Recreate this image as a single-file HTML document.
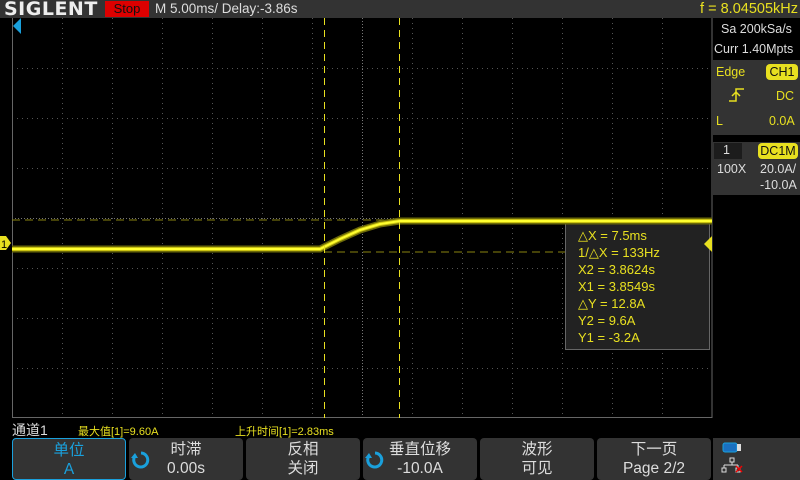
<!DOCTYPE html>
<html><head><meta charset="utf-8"><style>
*{margin:0;padding:0;box-sizing:border-box}
body{width:800px;height:480px;background:#000;overflow:hidden;position:relative;font-family:"Liberation Sans","Noto Sans CJK SC",sans-serif}
.abs{position:absolute}
.top{left:0;top:0;width:800px;height:18px;background:#333}
.logo{left:4px;top:-2px;color:#eee;font-weight:bold;font-size:19px;letter-spacing:0.5px;font-family:"DejaVu Sans",sans-serif}
.stop{left:105px;top:1px;width:44px;height:16px;background:#d00;color:#111;font-size:13px;text-align:center;line-height:16px}
.tb{left:155px;top:0;color:#ddd;font-size:13.5px;line-height:18px}
.freq{right:2px;top:0;color:#e8e020;font-size:14.5px;line-height:18px}
.rp{left:713px;width:87px;color:#ddd;font-size:12.5px}
.btn{top:438px;height:42px;width:114px;background:#333;border-radius:4px;color:#ddd;text-align:center;font-size:15.5px;line-height:19px;padding-top:2px}
.y{color:#e8e020}
</style></head><body>
<div class="abs top"></div>
<div class="abs logo">SIGLENT</div>
<div class="abs stop">Stop</div>
<div class="abs tb">M 5.00ms/ Delay:-3.86s</div>
<div class="abs freq">f = 8.04505kHz</div>

<svg class="abs" style="left:0;top:18px" width="713" height="400">
<g stroke="#555" stroke-width="1" stroke-dasharray="1 4">
<line x1="62.5" y1="0" x2="62.5" y2="400"/><line x1="112.5" y1="0" x2="112.5" y2="400"/><line x1="162.5" y1="0" x2="162.5" y2="400"/><line x1="212.5" y1="0" x2="212.5" y2="400"/><line x1="262.5" y1="0" x2="262.5" y2="400"/><line x1="312.5" y1="0" x2="312.5" y2="400"/><line x1="412.5" y1="0" x2="412.5" y2="400"/><line x1="462.5" y1="0" x2="462.5" y2="400"/><line x1="512.5" y1="0" x2="512.5" y2="400"/><line x1="562.5" y1="0" x2="562.5" y2="400"/><line x1="612.5" y1="0" x2="612.5" y2="400"/><line x1="662.5" y1="0" x2="662.5" y2="400"/>
<line x1="12" y1="50.5" x2="712" y2="50.5"/><line x1="12" y1="100.5" x2="712" y2="100.5"/><line x1="12" y1="150.5" x2="712" y2="150.5"/><line x1="12" y1="250.5" x2="712" y2="250.5"/><line x1="12" y1="300.5" x2="712" y2="300.5"/><line x1="12" y1="350.5" x2="712" y2="350.5"/>
</g>
<g stroke="#777" stroke-width="1" stroke-dasharray="1 2">
<line x1="362.5" y1="0" x2="362.5" y2="400"/><line x1="12" y1="200.5" x2="712" y2="200.5"/>
</g>
<rect x="12.5" y="-1" width="699.5" height="400.5" fill="none" stroke="#666"/>
<line x1="12" y1="202" x2="712" y2="202" stroke="#8a8510" stroke-dasharray="8 5"/>
<line x1="12" y1="234" x2="712" y2="234" stroke="#8a8510" stroke-dasharray="8 5"/>
<rect x="565.5" y="204.5" width="144" height="127" fill="#222" stroke="#666"/>
<polyline points="12,231 320,231 340,221 360,212 380,206 400,203 712,203" fill="none" stroke="#6a6808" stroke-width="7"/>
<polyline points="12,231 320,231 340,221 360,212 380,206 400,203 712,203" fill="none" stroke="#c8c010" stroke-width="4"/>
<polyline points="12,231 320,231 340,221 360,212 380,206 400,203 712,203" fill="none" stroke="#ffff30" stroke-width="2"/>
<line x1="324.5" y1="0" x2="324.5" y2="400" stroke="#e8e020" stroke-dasharray="7 5"/>
<line x1="399.5" y1="0" x2="399.5" y2="400" stroke="#e8e020" stroke-dasharray="7 5"/>
<polygon points="13,8 21,0 21,16" fill="#1aa0dc"/>
<g fill="#e8e020" font-family="Liberation Sans,sans-serif" font-size="13">
<text x="578" y="222">△X = 7.5ms</text>
<text x="578" y="239">1/△X = 133Hz</text>
<text x="578" y="256">X2 = 3.8624s</text>
<text x="578" y="273">X1 = 3.8549s</text>
<text x="578" y="290">△Y = 12.8A</text>
<text x="578" y="307">Y2 = 9.6A</text>
<text x="578" y="324">Y1 = -3.2A</text>
</g>
<polygon points="704,226 712,218 712,234" fill="#e8e020"/>
<polygon points="0,218 6,218 11,225 6,232 0,232" fill="#e8e020"/>
<text x="1" y="230" font-size="11" font-family="Liberation Sans,sans-serif" fill="#000">1</text>
</svg>

<div class="abs" style="left:713px;top:18px;width:87px;height:40px;background:#000"></div>
<div class="abs rp" style="top:22px;text-align:center">Sa 200kSa/s</div>
<div class="abs rp" style="top:42px;left:714px">Curr 1.40Mpts</div>
<div class="abs" style="left:713px;top:60px;width:87px;height:75px;background:#333"></div>
<div class="abs rp y" style="top:65px;left:716px">Edge</div>
<div class="abs" style="left:766px;top:64px;width:32px;height:16px;background:#e8e020;border-radius:4px;color:#111;font-size:12.5px;text-align:center;line-height:16px">CH1</div>
<svg class="abs" style="left:728px;top:87px" width="20" height="16"><path d="M1 14H8V2H16M4 9L8 5L12 9" fill="none" stroke="#e8e020" stroke-width="1.5"/></svg>
<div class="abs rp y" style="top:89px;left:776px">DC</div>
<div class="abs rp y" style="top:114px;left:716px">L</div>
<div class="abs rp y" style="top:114px;left:769px">0.0A</div>
<div class="abs" style="left:713px;top:142px;width:87px;height:53px;background:#333"></div>
<div class="abs" style="left:714px;top:143px;width:28px;height:16px;background:#1c1c1c"></div>
<div class="abs rp" style="top:143px;left:723px">1</div>
<div class="abs" style="left:758px;top:143px;width:40px;height:16px;background:#e8e020;border-radius:4px;color:#111;font-size:12.5px;text-align:center;line-height:16px">DC1M</div>
<div class="abs rp" style="top:162px;left:717px">100X</div>
<div class="abs rp" style="top:162px;left:760px">20.0A/</div>
<div class="abs rp" style="top:178px;left:760px">-10.0A</div>

<div class="abs" style="left:12px;top:420px;color:#ddd;font-size:14px">通道1</div>
<div class="abs y" style="left:78px;top:423px;font-size:11px">最大值[1]=9.60A</div>
<div class="abs y" style="left:235px;top:423px;font-size:11px">上升时间[1]=2.83ms</div>

<div class="abs btn" style="left:12px;border:1px solid #1aa0dc;color:#1aa0dc">单位<br>A</div>
<div class="abs btn" style="left:129px">时滞<br>0.00s</div>
<div class="abs btn" style="left:246px">反相<br>关闭</div>
<div class="abs btn" style="left:363px">垂直位移<br>-10.0A</div>
<div class="abs btn" style="left:480px">波形<br>可见</div>
<div class="abs btn" style="left:597px">下一页<br>Page 2/2</div>
<svg class="abs" style="left:130px;top:450px" width="20" height="20"><path d="M5 6A7 7 0 1 0 11 3" fill="none" stroke="#1aa0dc" stroke-width="3"/><polygon points="1,8 8,8 5,3" fill="#1aa0dc"/></svg>
<svg class="abs" style="left:364px;top:450px" width="20" height="20"><path d="M5 6A7 7 0 1 0 11 3" fill="none" stroke="#1aa0dc" stroke-width="3"/><polygon points="1,8 8,8 5,3" fill="#1aa0dc"/></svg>
<div class="abs" style="left:713px;top:438px;width:87px;height:42px;background:#333"></div>
<svg class="abs" style="left:720px;top:442px" width="30" height="36"><rect x="3" y="1" width="14" height="9" rx="2" fill="#1a70c0" stroke="#1aa0dc"/><rect x="17" y="2" width="4" height="7" fill="#ddd"/><path d="M10 16h4v4h-4zM12 20v3M4 23h14M4 23v3M18 23v3M2 26h4v4h-4zM16 26h4v4h-4z" fill="none" stroke="#ddd"/><path d="M16 24l6 6M22 24l-6 6" stroke="#e00" stroke-width="1.5"/></svg>
</body></html>
